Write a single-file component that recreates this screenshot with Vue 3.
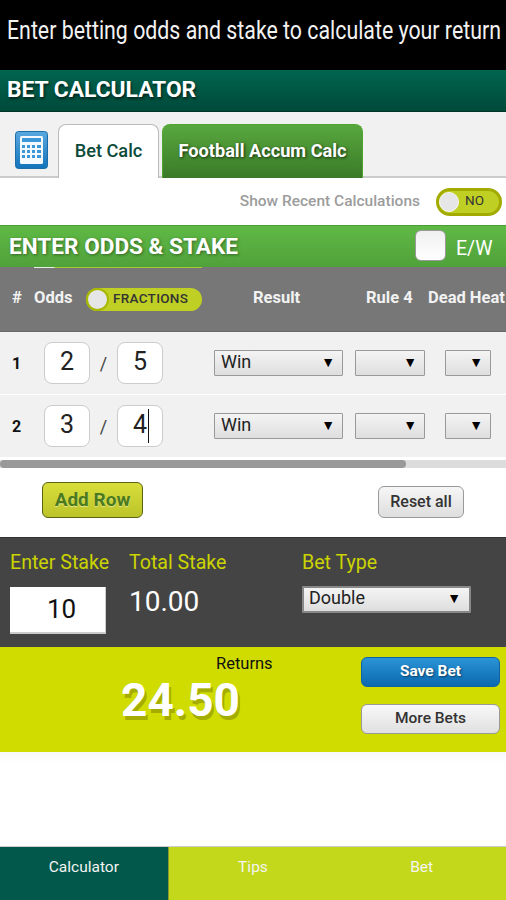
<script setup>
const rows = [
  { id: 1, top: '2', bottom: '5', caret: false },
  { id: 2, top: '3', bottom: '4', caret: true }
]
const tabs = ['Calculator', 'Tips', 'Bet']
</script>

<template>
  <div class="page">
    <div class="promo"><span class="promo-text">Enter betting odds and stake to calculate your return</span></div>
    <div class="title">BET CALCULATOR</div>

    <div class="tabs">
      <svg class="calc-icon" width="33" height="38" viewBox="0 0 33 38">
        <defs>
          <linearGradient id="calcBg" x1="0" y1="0" x2="0" y2="1">
            <stop offset="0" stop-color="#5aa9e0" />
            <stop offset="1" stop-color="#1273ba" />
          </linearGradient>
        </defs>
        <rect x="0.5" y="0.5" width="32" height="37" rx="3" fill="url(#calcBg)" stroke="#1a6da8" />
        <rect x="5" y="5" width="23" height="28" rx="1.5" fill="#f4f9fd" />
        <rect x="7" y="7" width="19" height="4" fill="#3b97d8" />
        <g fill="#3b97d8">
          <rect x="7" y="14" width="3" height="3" /><rect x="12" y="14" width="3" height="3" /><rect x="17" y="14" width="3" height="3" /><rect x="22" y="14" width="4" height="3" />
          <rect x="7" y="19" width="3" height="3" /><rect x="12" y="19" width="3" height="3" /><rect x="17" y="19" width="3" height="3" /><rect x="22" y="19" width="4" height="3" />
          <rect x="7" y="24" width="3" height="3" /><rect x="12" y="24" width="3" height="3" /><rect x="17" y="24" width="3" height="3" /><rect x="22" y="24" width="4" height="3" />
        </g>
      </svg>
      <div class="tab active">Bet Calc</div>
      <div class="tab other">Football Accum Calc</div>
    </div>

    <div class="recent">
      <span class="recent-label">Show Recent Calculations</span>
      <div class="toggle-no">
        <span class="knob"></span>
        <span class="toggle-text">NO</span>
      </div>
    </div>

    <div class="section">
      <span class="section-title">ENTER ODDS &amp; STAKE</span>
      <span class="check"></span>
      <span class="ew">E/W</span>
    </div>

    <div class="thead">
      <i class="frac-line"></i>
      <span class="th-hash">#</span>
      <span class="th-odds">Odds</span>
      <div class="toggle-frac">
        <span class="knob"></span>
        <span class="toggle-text">FRACTIONS</span>
      </div>
      <span class="th-result">Result</span>
      <span class="th-rule">Rule 4</span>
      <span class="th-dead">Dead Heat</span>
    </div>

    <div v-for="row in rows" :key="row.id" class="row">
      <span class="num">{{ row.id }}</span>
      <div class="odd">{{ row.top }}</div>
      <span class="slash">/</span>
      <div class="odd">{{ row.bottom }}<i v-if="row.caret" class="caret"></i></div>
      <div class="select sel-result"><span>Win</span><b>▼</b></div>
      <div class="select sel-rule"><span></span><b>▼</b></div>
      <div class="select sel-dead"><span></span><b>▼</b></div>
    </div>

    <div class="scroll"><div class="thumb"></div></div>

    <div class="actions">
      <div class="add">Add Row</div>
      <div class="reset">Reset all</div>
    </div>

    <div class="stake">
      <div class="col-enter">
        <div class="label">Enter Stake</div>
        <div class="stake-input">10</div>
      </div>
      <div class="col-total">
        <div class="label">Total Stake</div>
        <div class="total">10.00</div>
      </div>
      <div class="col-type">
        <div class="label">Bet Type</div>
        <div class="select sel-type"><span>Double</span><b>▼</b></div>
      </div>
    </div>

    <div class="returns">
      <div class="ret-values">
        <div class="ret-label">Returns</div>
        <div class="ret-amount">24.50</div>
      </div>
      <div class="ret-buttons">
        <div class="save">Save Bet</div>
        <div class="more">More Bets</div>
      </div>
    </div>

    <div class="blank"></div>

    <div class="nav">
      <div v-for="(tab, i) in tabs" :key="tab" class="nav-item" :class="{ on: i === 0 }">{{ tab }}</div>
    </div>
  </div>
</template>

<style>
html, body {
  margin: 0;
  background: #fff;
}
</style>

<style scoped>
.page {
  width: 506px;
  height: 900px;
  overflow: hidden;
  display: flex;
  flex-direction: column;
  font-family: Roboto, "Liberation Sans", sans-serif;
}

.promo {
  height: 70px;
  flex: none;
  box-sizing: border-box;
  background: #000;
  color: #f2f2f2;
  padding: 12px 0 0 7px;
  font-size: 26px;
  line-height: 36px;
  white-space: nowrap;
  overflow: hidden;
}

.promo-text {
  display: inline-block;
  transform: scaleX(0.82);
  transform-origin: left center;
}

.title {
  height: 42px;
  flex: none;
  box-sizing: border-box;
  padding-left: 7px;
  background: linear-gradient(#00654f, #004a3a);
  border-bottom: 1px solid #003326;
  color: #fff;
  font-size: 22.8px;
  font-weight: 700;
  line-height: 40px;
  text-shadow: 1px 2px 3px rgba(0, 0, 0, 0.6);
}

.tabs {
  height: 66px;
  flex: none;
  box-sizing: border-box;
  display: flex;
  align-items: flex-end;
  padding-left: 15px;
  background: #f1f1f1;
  border-bottom: 2px solid #ccc;
}

.calc-icon {
  margin: 0 10px 7px 0;
  flex: none;
}

.tab {
  height: 54px;
  box-sizing: border-box;
  border-radius: 8px 8px 0 0;
  font-size: 18.2px;
  font-weight: 500;
  text-align: center;
  line-height: 52px;
  margin-bottom: -2px;
}

.tab.active {
  width: 101px;
  background: #fff;
  border: 1px solid #bbb;
  border-bottom: 0;
  color: #0c4a3a;
}

.tab.other {
  width: 201px;
  margin-left: 3px;
  height: 54px;
  background: linear-gradient(#58a83e, #3a7a28);
  border: 1px solid #4fa52f;
  border-bottom: 0;
  color: #fff;
  font-weight: 700;
  text-shadow: 1px 1px 3px rgba(0, 0, 0, 0.7);
}

.recent {
  height: 47px;
  flex: none;
  display: flex;
  align-items: center;
  justify-content: flex-end;
  padding-right: 4px;
  background: #fff;
}

.recent-label {
  color: #9c9c9c;
  font-size: 15.5px;
  font-weight: 500;
  margin: 0 16px 2px 0;
}

.toggle-no {
  width: 66px;
  height: 28px;
  box-sizing: border-box;
  border: 3px solid #a3ab00;
  border-radius: 14px;
  background: #bfcf24;
  display: flex;
  align-items: center;
  color: #333;
  font-size: 13.5px;
  gap: 6px;
}

.toggle-text {
  padding-bottom: 3px;
}

.knob {
  display: block;
  flex: none;
  width: 20px;
  height: 20px;
  border-radius: 50%;
  background: #e6e6e6;
  border: 1px solid #f6f6f6;
  box-sizing: border-box;
}

.section {
  height: 42px;
  flex: none;
  box-sizing: border-box;
  display: flex;
  align-items: center;
  padding-left: 9px;
  background: linear-gradient(#5fb945, #50a13a);
  border-top: 1px solid #4a9c34;
  color: #fff;
}

.section-title {
  font-size: 22.6px;
  font-weight: 700;
  text-shadow: 1px 1px 3px rgba(0, 0, 0, 0.4);
  width: 406px;
}

.check {
  width: 31px;
  height: 31px;
  box-sizing: border-box;
  background: linear-gradient(#f0f0f0, #fff);
  border: 1px solid #999;
  border-radius: 6px;
  margin-bottom: 2px;
}

.ew {
  font-size: 19.5px;
  margin: 4px 0 0 10px;
}

.thead {
  height: 65px;
  flex: none;
  box-sizing: border-box;
  display: flex;
  align-items: center;
  position: relative;
  background: #777;
  border-bottom: 1px solid #666;
  color: #f2f2f2;
  font-size: 16.5px;
  font-weight: 700;
  white-space: nowrap;
}

.frac-line {
  position: absolute;
  left: 34px;
  top: 0;
  width: 168px;
  height: 1px;
  background: linear-gradient(90deg, #e6efe0 20px, #a8c43a 21px);
}

.th-hash, .th-odds, .th-result, .th-rule, .th-dead {
  padding-bottom: 4px;
}

.th-hash { margin-left: 12px; width: 22px; flex: none; }
.th-odds { width: 52px; flex: none; }
.th-result { margin-left: 51px; width: 113px; flex: none; }
.th-rule { width: 62px; flex: none; }

.toggle-frac {
  width: 116px;
  height: 23px;
  flex: none;
  border-radius: 12px;
  background: #bfcf24;
  display: flex;
  align-items: center;
  gap: 4px;
  color: #333;
  font-size: 13.5px;
  font-weight: 500;
  letter-spacing: 0.3px;
}

.toggle-frac .knob {
  height: 23px;
  width: 23px;
  border: 2px solid #a8b800;
}

.row {
  height: 62px;
  flex: none;
  display: flex;
  align-items: center;
  background: #f1f1f1;
  margin-bottom: 1px;
  color: #111;
}

.num {
  width: 44px;
  box-sizing: border-box;
  padding-left: 12px;
  font-size: 16px;
  font-weight: 700;
}

.odd {
  width: 46px;
  height: 42px;
  box-sizing: border-box;
  border: 1px solid #ccc;
  border-radius: 8px;
  background: #fff;
  font-size: 25px;
  line-height: 38px;
  text-align: center;
  position: relative;
  color: #222;
}

.caret {
  position: absolute;
  left: 30px;
  top: 3px;
  width: 1px;
  height: 34px;
  background: #111;
}

.slash {
  width: 27px;
  text-align: center;
  font-size: 18px;
  color: #444;
  padding-top: 1px;
}

.select {
  height: 26px;
  box-sizing: border-box;
  border: 1px solid #999;
  border-radius: 1px;
  background: linear-gradient(#f4f4f4, #dedede);
  display: flex;
  align-items: center;
  justify-content: space-between;
  color: #222;
}

.select span {
  font-size: 18px;
  padding: 0 0 4px 6px;
}

.select b {
  font-size: 14px;
  font-weight: 400;
  color: #000;
  padding: 0 7px 3px 0;
}

.sel-result { width: 129px; margin-left: 51px; }
.sel-rule { width: 70px; margin-left: 12px; }
.sel-dead { width: 46px; margin-left: 20px; }

.scroll {
  height: 8px;
  flex: none;
  margin-top: 2px;
  background: #dcdcdc;
}

.thumb {
  width: 406px;
  height: 8px;
  background: #999;
  border-radius: 4px;
}

.actions {
  height: 69px;
  flex: none;
  box-sizing: border-box;
  display: flex;
  align-items: center;
  justify-content: space-between;
  padding: 0 42px;
  background: #fff;
}

.add {
  width: 101px;
  height: 36px;
  box-sizing: border-box;
  margin-top: -6px;
  border: 1px solid #5a6310;
  border-radius: 6px;
  background: linear-gradient(#d8de3a, #bcc42a);
  color: #4a7a1c;
  font-size: 19px;
  font-weight: 700;
  text-align: center;
  line-height: 33px;
  text-shadow: 0 1px 1px rgba(255, 255, 255, 0.5);
}

.reset {
  width: 86px;
  height: 32px;
  box-sizing: border-box;
  margin-top: -2px;
  border: 1px solid #999;
  border-radius: 6px;
  background: linear-gradient(#f6f6f6, #dedede);
  color: #333;
  font-size: 16px;
  font-weight: 500;
  text-align: center;
  line-height: 30px;
}

.stake {
  height: 110px;
  flex: none;
  box-sizing: border-box;
  display: flex;
  padding: 13px 0 0 10px;
  background: #444;
  border-top: 1px solid #333;
}

.label {
  color: #cbd400;
  font-size: 19.6px;
  line-height: 24px;
}

.col-enter { width: 119px; }
.col-total { width: 173px; }

.stake-input {
  width: 96px;
  height: 47px;
  box-sizing: border-box;
  margin-top: 12px;
  padding-left: 8px;
  background: #fff;
  border-right: 1px solid #ccc;
  border-bottom: 2px solid #ccc;
  color: #111;
  font-size: 26px;
  line-height: 45px;
  text-align: center;
}

.total {
  color: #fff;
  font-size: 28px;
  line-height: 36px;
  margin-top: 9px;
}

.sel-type {
  width: 169px;
  height: 27px;
  margin-top: 11px;
  border: 2px solid #888;
}

.sel-type span { font-size: 18px; padding-left: 5px; }
.sel-type b { font-size: 14px; padding-right: 8px; }

.returns {
  height: 105px;
  flex: none;
  display: flex;
  background: #d0db00;
}

.ret-values {
  width: 361px;
  flex: none;
  box-sizing: border-box;
  position: relative;
}

.ret-label {
  position: absolute;
  left: 216px;
  top: 7px;
  color: #111;
  font-size: 16.5px;
  line-height: 20px;
}

.ret-amount {
  position: absolute;
  left: 121px;
  top: 25px;
  color: #fff;
  font-size: 46px;
  font-weight: 700;
  line-height: 56px;
  text-shadow: 2px 4px 0 #a5ad00;
}

.ret-buttons {
  padding-top: 10px;
  display: flex;
  flex-direction: column;
  gap: 17px;
}

.save, .more {
  width: 139px;
  height: 30px;
  box-sizing: border-box;
  border-radius: 6px;
  font-size: 15.5px;
  text-align: center;
  line-height: 27px;
}

.save {
  background: linear-gradient(#2a94d6, #0b69b0);
  border: 1px solid #0f62a5;
  color: #fff;
  font-weight: 700;
  text-shadow: 1px 1px 2px rgba(0, 0, 0, 0.5);
}

.more {
  background: linear-gradient(#f8f8f8, #e0e0e0);
  border: 1px solid #999;
  color: #333;
  font-weight: 500;
}

.blank {
  height: 94px;
  flex: none;
  background: linear-gradient(#f8f8f8, #fff 12%);
}

.nav {
  height: 54px;
  flex: none;
  display: flex;
  border-top: 1px solid #ccc;
  box-sizing: border-box;
  background: #c3d81a;
  color: #f4f4f4;
  font-size: 15.5px;
}

.nav-item {
  width: 168.67px;
  text-align: center;
  padding-top: 10px;
  line-height: 20px;
}

.nav-item.on {
  background: #02584a;
  border-right: 1px solid #8a9a30;
  box-sizing: border-box;
}
</style>
